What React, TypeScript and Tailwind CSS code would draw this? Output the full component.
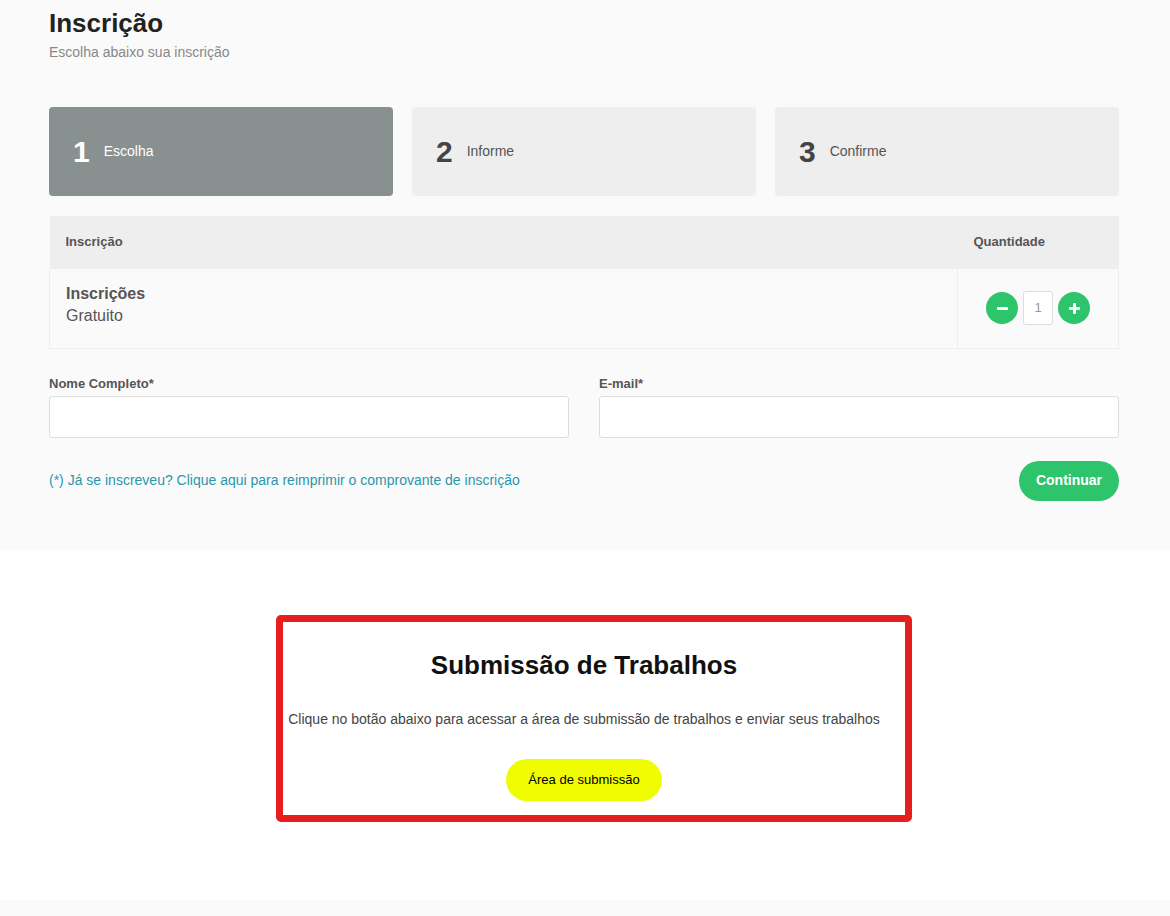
export default function App() {
  return (
    <div className="w-[1170px] min-h-[916px] bg-[#fafafa]" style={{ fontFamily: '"Liberation Sans", Arial, sans-serif' }}>
      {/* Inscrição */}
      <section className="bg-[#fafafa] pt-[8px] pb-[49px]">
        <div className="w-[1070px] ml-[49px]">
          <h1 className="text-[26px] leading-[30px] font-bold text-[#222]">Inscrição</h1>
          <p className="text-[14px] leading-[18px] mt-[5px] text-[#888]">Escolha abaixo sua inscrição</p>

          <div className="grid grid-cols-3 gap-[19px] mt-[46px]">
            {[
              { n: "1", label: "Escolha", active: true },
              { n: "2", label: "Informe", active: false },
              { n: "3", label: "Confirme", active: false },
            ].map((s) => (
              <div
                key={s.n}
                className={`h-[89px] rounded-[4px] flex items-center pl-[24px] gap-[14px] ${
                  s.active ? "bg-[#899190] text-white" : "bg-[#eeeeee] text-[#555]"
                }`}
              >
                <span className={`text-[30px] font-bold leading-none ${s.active ? "text-white" : "text-[#444]"}`}>{s.n}</span>
                <span className="text-[14px]">{s.label}</span>
              </div>
            ))}
          </div>

          <table className="w-full mt-[20px] border-collapse">
            <thead>
              <tr className="bg-[#eeeeee] h-[52px]">
                <th className="text-left pl-[16px] text-[13px] font-bold text-[#555]">Inscrição</th>
                <th className="w-[161px] text-left pl-[16px] text-[13px] font-bold text-[#555]">Quantidade</th>
              </tr>
            </thead>
            <tbody>
              <tr className="h-[80px]">
                <td className="border border-[#eeeeee] align-top pt-[14px] pl-[16px] text-[16px] leading-[22px] text-[#555]">
                  <div className="font-bold">Inscrições</div>
                  <div>Gratuito</div>
                </td>
                <td className="border border-[#eeeeee]">
                  <div className="flex items-center justify-center gap-[5px]">
                    <button className="w-[32px] h-[32px] rounded-full bg-[#2ec46b] flex items-center justify-center">
                      <span className="block w-[11px] h-[3px] bg-white rounded-[1px]" />
                    </button>
                    <div className="w-[30px] h-[34px] border border-[#dddddd] rounded-[3px] bg-white flex items-center justify-center text-[13px] text-[#999]">1</div>
                    <button className="w-[32px] h-[32px] rounded-full bg-[#2ec46b] flex items-center justify-center relative">
                      <span className="block w-[11px] h-[3px] bg-white rounded-[1px]" />
                      <span className="absolute block w-[3px] h-[11px] bg-white rounded-[1px]" />
                    </button>
                  </div>
                </td>
              </tr>
            </tbody>
          </table>

          <div className="grid grid-cols-2 gap-[30px] mt-[27px]">
            <div>
              <label className="block text-[13px] font-bold text-[#555] leading-[16px]">Nome Completo*</label>
              <input className="block w-full h-[42px] mt-[4px] bg-white border border-[#dddddd] rounded-[3px] outline-none" />
            </div>
            <div>
              <label className="block text-[13px] font-bold text-[#555] leading-[16px]">E-mail*</label>
              <input className="block w-full h-[42px] mt-[4px] bg-white border border-[#dddddd] rounded-[3px] outline-none" />
            </div>
          </div>

          <div className="flex items-center justify-between mt-[23px]">
            <a className="text-[14px] text-[#2a97ac] cursor-pointer">(*) Já se inscreveu? Clique aqui para reimprimir o comprovante de inscrição</a>
            <button className="w-[100px] h-[40px] rounded-full bg-[#2ec46b] text-white text-[14px] font-bold">Continuar</button>
          </div>
        </div>
      </section>

      {/* Submissão */}
      <section className="bg-white h-[350px] pt-[65px]">
        <div className="ml-[276px] w-[636px] h-[207px] border-[7px] border-[#e71e1e] rounded-[5px] flex flex-col items-center pt-[28px] pr-[20px]">
          <h2 className="text-[26px] leading-[30px] font-bold text-[#111]">Submissão de Trabalhos</h2>
          <p className="text-[14px] text-[#444] mt-[29px]">Clique no botão abaixo para acessar a área de submissão de trabalhos e enviar seus trabalhos</p>
          <button className="w-[156px] h-[42px] rounded-full bg-[#f0fc00] text-[13px] text-black mt-[29px]">Área de submissão</button>
        </div>
      </section>
    </div>
  );
}
